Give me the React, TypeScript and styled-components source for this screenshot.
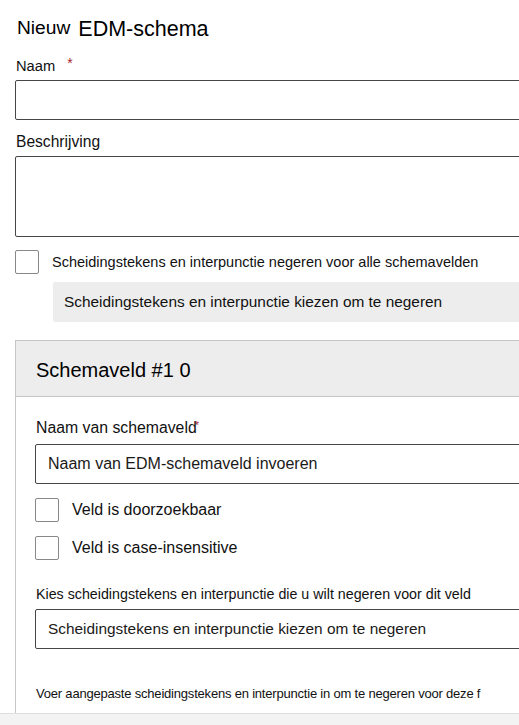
import styled, { createGlobalStyle } from 'styled-components'

const GlobalStyle = createGlobalStyle`
  html,
  body {
    margin: 0;
    padding: 0;
    background: #ffffff;
    overflow: hidden;
  }

  body {
    font-family: 'Liberation Sans', Arial, sans-serif;
    color: #111111;
  }
`

const Page = styled.div`
  display: flex;
  flex-direction: column;
  width: 519px;
  height: 725px;
  overflow: hidden;
`

const Content = styled.div`
  flex: 1;
  overflow: hidden;
  padding-left: 15px;
`

const Form = styled.form`
  display: flex;
  flex-direction: column;
  width: 580px;
`

const Title = styled.h1`
  margin: 16px 0 0 2px;
  font-size: 19.2px;
  font-weight: 400;
  line-height: 24px;
  color: #000000;
`

const TitleMain = styled.span`
  margin-left: 8px;
  font-size: 21.5px;
  vertical-align: -2px;
`

const Label = styled.label<{ $size?: number; $top?: number; $tight?: boolean }>`
  display: block;
  margin-top: ${({ $top }) => $top ?? 0}px;
  padding-left: 1px;
  font-size: ${({ $size }) => $size ?? 14.7}px;
  line-height: 20px;
  letter-spacing: ${({ $tight }) => ($tight ? '-0.2px' : 'normal')};
  color: #111111;
  white-space: nowrap;
`

const Required = styled.span<{ $overlap?: boolean }>`
  margin-left: ${({ $overlap }) => ($overlap ? '-2px' : '12px')};
  color: #a4262c;
  font-size: ${({ $overlap }) => ($overlap ? '11px' : '14px')};
  vertical-align: ${({ $overlap }) => ($overlap ? '4px' : '3px')};
`

const TextInput = styled.div<{ $height?: number; $top?: number }>`
  box-sizing: border-box;
  display: flex;
  align-items: center;
  height: ${({ $height }) => $height ?? 40}px;
  margin-top: ${({ $top }) => $top ?? 4}px;
  padding: 0 12px;
  border: 1px solid #484644;
  border-radius: 2px;
  background: #ffffff;
`

const Placeholder = styled.span<{ $size?: number }>`
  font-size: ${({ $size }) => $size ?? 16}px;
  color: #1b1a19;
  white-space: nowrap;
`

const CheckRow = styled.div<{ $top: number }>`
  display: flex;
  align-items: center;
  gap: 13px;
  margin-top: ${({ $top }) => $top}px;
`

const Box = styled.span`
  box-sizing: border-box;
  flex: none;
  width: 24px;
  height: 24px;
  border: 1px solid #8a8886;
  border-radius: 2px;
  background: #ffffff;
`

const CheckText = styled.span<{ $size?: number }>`
  font-size: ${({ $size }) => $size ?? 16}px;
  color: #111111;
  white-space: nowrap;
`

const GreyButton = styled.div`
  display: flex;
  align-items: center;
  height: 40px;
  margin: 8px 0 0 38px;
  padding-left: 11px;
  background: #ededed;
  border-radius: 2px;
  font-size: 15.4px;
  color: #111111;
  white-space: nowrap;
`

const Panel = styled.section`
  margin-top: 18px;
  border: 1px solid #c8c6c4;
  border-right: none;
`

const PanelHeader = styled.div`
  box-sizing: border-box;
  display: flex;
  align-items: center;
  height: 56px;
  padding: 4px 0 0 20px;
  background: #ededed;
  border-bottom: 1px solid #c8c6c4;
`

const PanelTitle = styled.h2`
  margin: 0;
  font-size: 20px;
  font-weight: 400;
  color: #000000;
`

const PanelBody = styled.div`
  display: flex;
  flex-direction: column;
  padding: 18px 0 0 19px;
  height: 400px;
`

const ScrollTrack = styled.div`
  flex: none;
  height: 11px;
  background: #f3f3f3;
  border-top: 1px solid #dedede;
`

export default function App() {
  return (
    <Page>
      <GlobalStyle />
      <Content>
        <Form>
          <Title>
            Nieuw<TitleMain>EDM-schema</TitleMain>
          </Title>

          <Label $top={12}>
            Naam<Required>*</Required>
          </Label>
          <TextInput />

          <Label $top={12} $size={15.6}>
            Beschrijving
          </Label>
          <TextInput $height={81} />

          <CheckRow $top={13}>
            <Box />
            <CheckText $size={14.5}>Scheidingstekens en interpunctie negeren voor alle schemavelden</CheckText>
          </CheckRow>
          <GreyButton>Scheidingstekens en interpunctie kiezen om te negeren</GreyButton>

          <Panel>
            <PanelHeader>
              <PanelTitle>Schemaveld #1 0</PanelTitle>
            </PanelHeader>
            <PanelBody>
              <Label $size={15.8}>
                Naam van schemaveld<Required $overlap>*</Required>
              </Label>
              <TextInput $top={6}>
                <Placeholder>Naam van EDM-schemaveld invoeren</Placeholder>
              </TextInput>

              <CheckRow $top={14}>
                <Box />
                <CheckText>Veld is doorzoekbaar</CheckText>
              </CheckRow>
              <CheckRow $top={14}>
                <Box />
                <CheckText>Veld is case-insensitive</CheckText>
              </CheckRow>

              <Label $top={24} $size={14.25}>
                Kies scheidingstekens en interpunctie die u wilt negeren voor dit veld
              </Label>
              <TextInput $top={5}>
                <Placeholder $size={15.4}>Scheidingstekens en interpunctie kiezen om te negeren</Placeholder>
              </TextInput>

              <Label $top={35} $size={13} $tight>
                Voer aangepaste scheidingstekens en interpunctie in om te negeren voor deze f
              </Label>
              <TextInput $top={10} />
            </PanelBody>
          </Panel>
        </Form>
      </Content>
      <ScrollTrack />
    </Page>
  )
}
